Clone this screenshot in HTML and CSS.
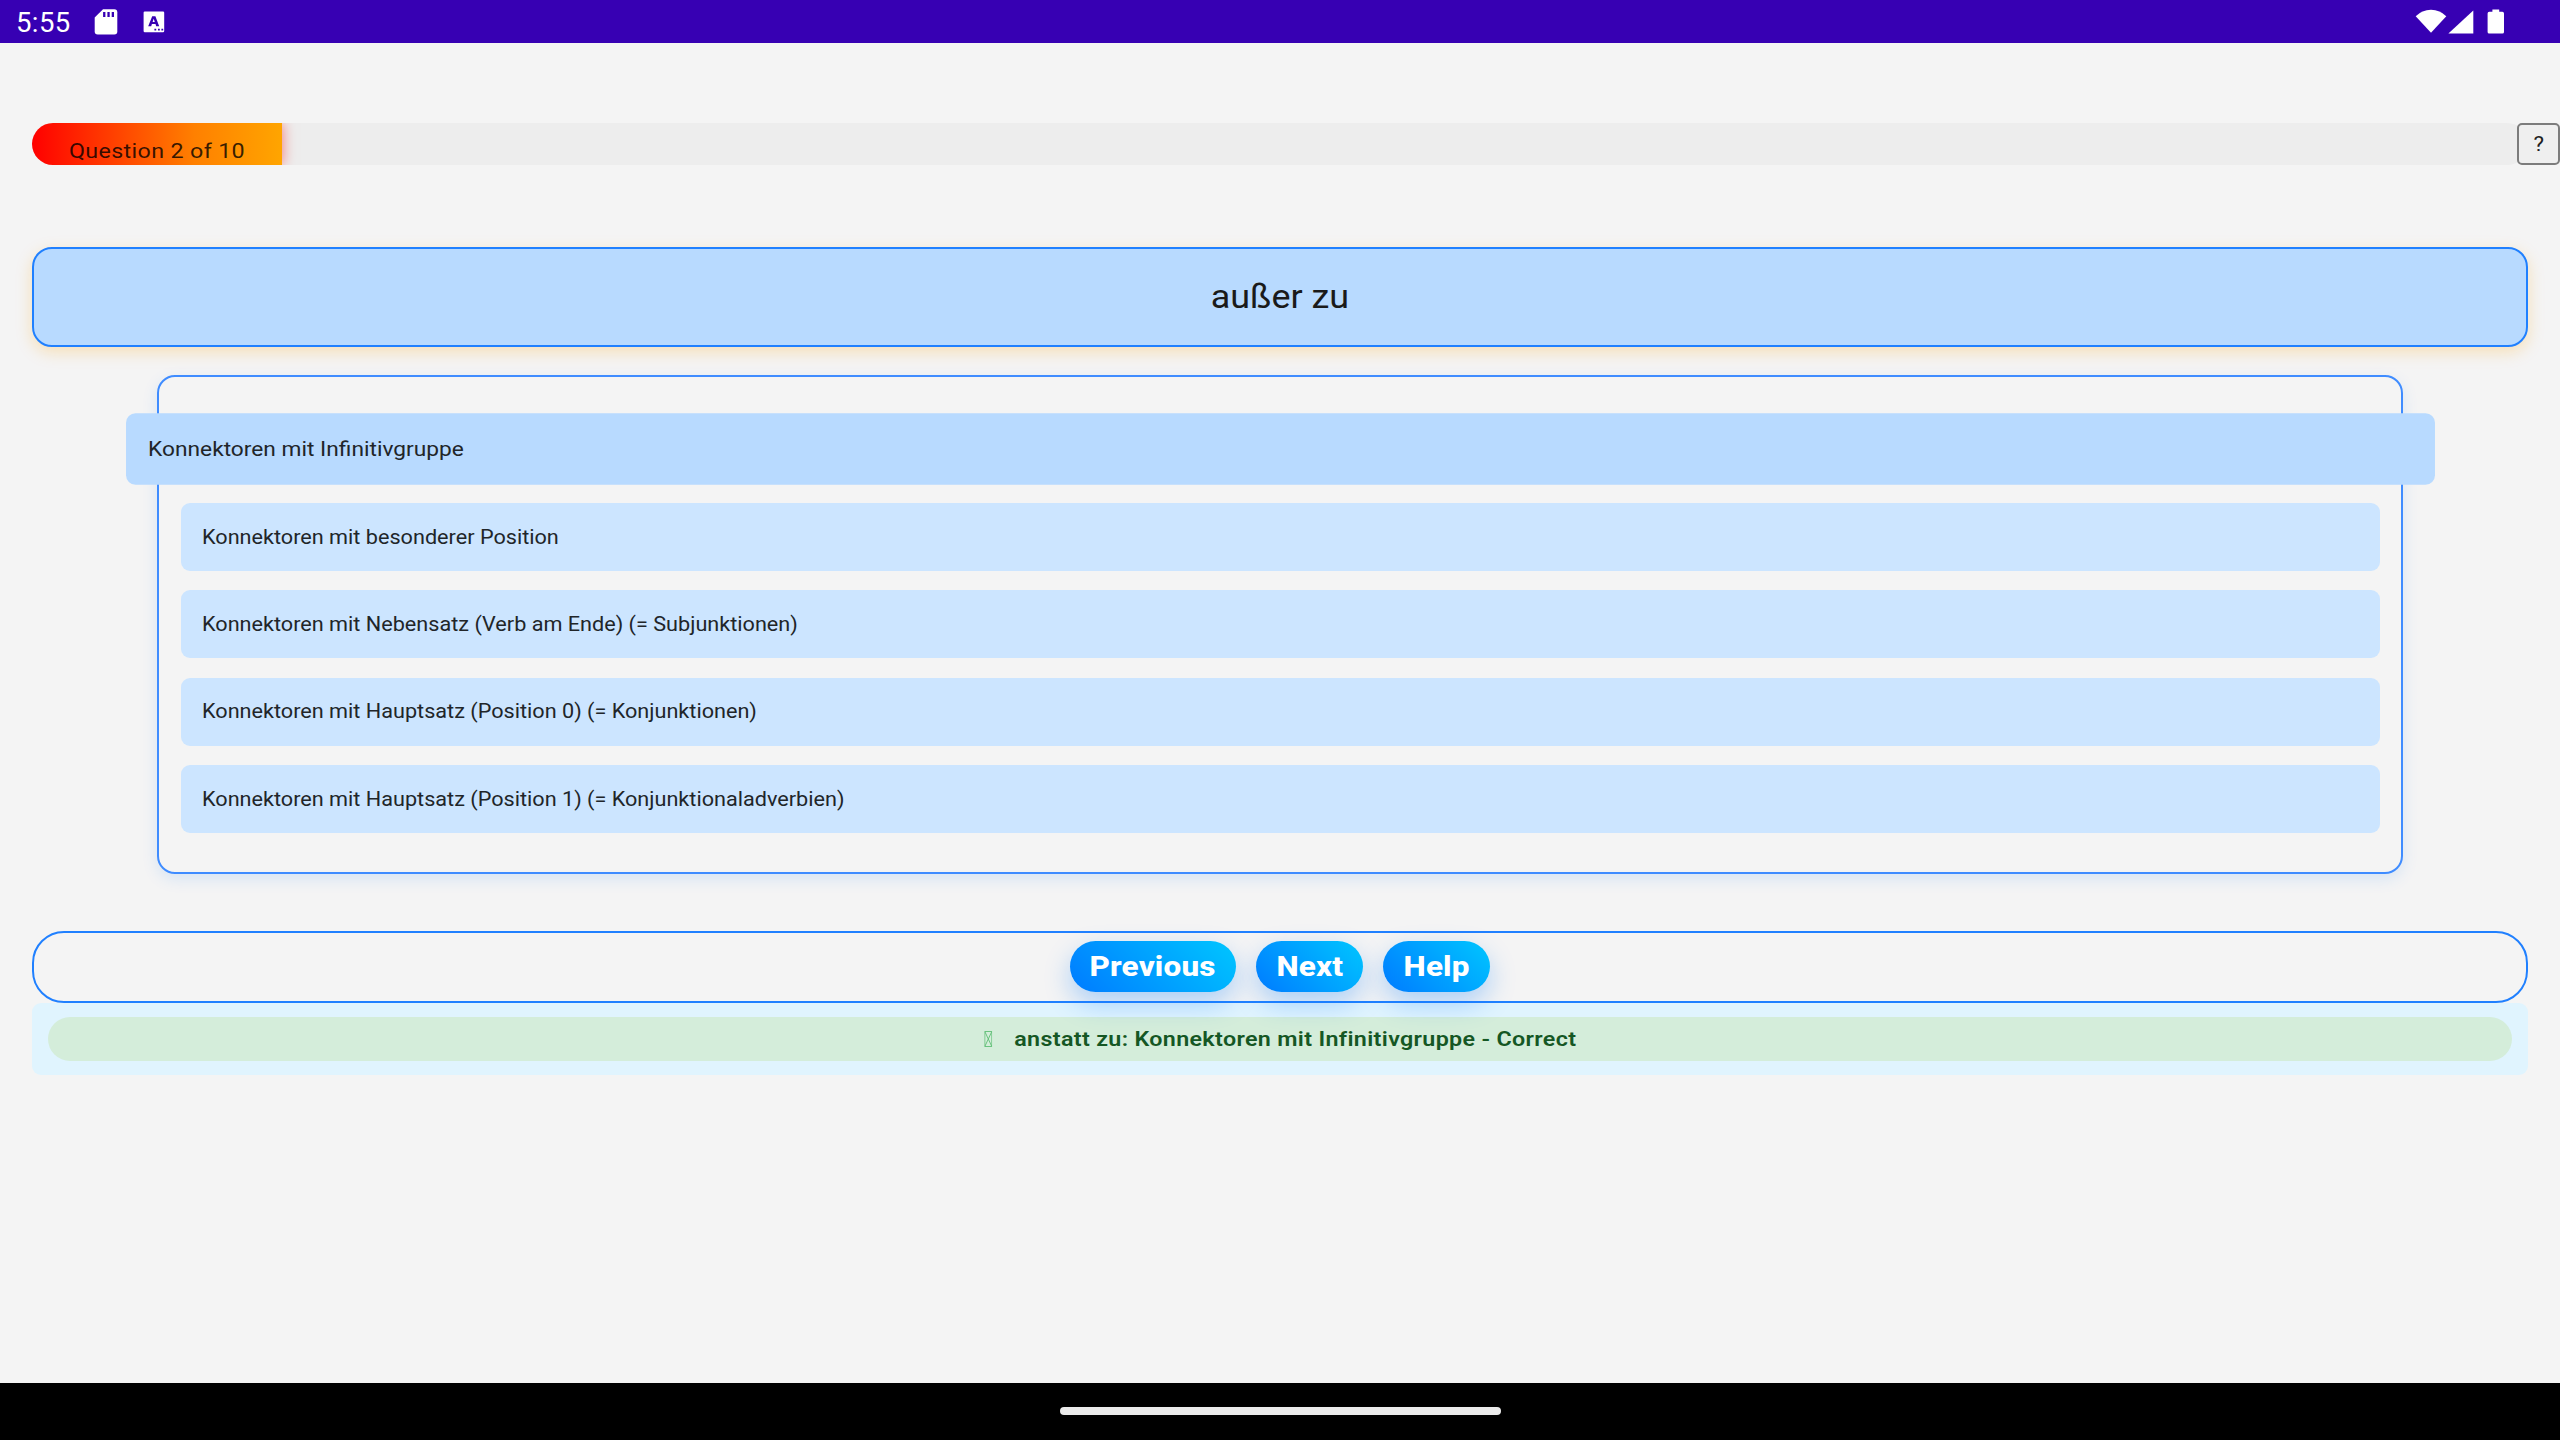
FILE: index.html
```html
<!DOCTYPE html>
<html lang="de">
<head>
<meta charset="utf-8">
<title>Konnektoren Quiz</title>
<link rel="stylesheet" href="styles.css">
</head>
<body>
<header class="status-bar">
  <span class="clock">5:55</span>
  <svg class="icon-sd" viewBox="0 0 24 26" width="24" height="26"><path fill="#fff" d="M9 0.3H20.3Q23.3 0.3 23.3 3.3V22.4Q23.3 25.4 20.3 25.4H3.7Q.7 25.4 .7 22.4V8.6Z"/><path fill="#3700b3" d="M9.1 3H11.4V8H9.1ZM13.4 3H15.7V8H13.4ZM17.7 3H20V8H17.7Z"/></svg>
  <svg class="icon-lang" viewBox="0 0 22 22" width="22" height="22"><rect x=".6" y=".6" width="20.6" height="20.6" rx="1.2" fill="#fff"/><path fill="#3700b3" fill-rule="evenodd" d="M9.2 5.2H12.4L16.2 15.2H13.2L12.5 13.1H8.9L8.2 15.2H5.2ZM10.7 7.8L9.6 11H11.8ZM11.4 17.7h1.8v1.8h-1.8ZM15 17.7h1.8v1.8H15ZM18.4 17.7h1.8v1.8h-1.8Z"/></svg>
  <span class="status-spacer"></span>
  <svg class="icon-wifi" viewBox="0 0 32 24" width="32" height="24"><path fill="#fff" d="M.7 7.2Q7 .7 16 .7T31.3 7.2L16 23.7Z"/></svg>
  <svg class="icon-signal" viewBox="0 0 26 24" width="26" height="24"><path fill="#fff" d="M25.3.6V23.4H.4Z"/></svg>
  <svg class="icon-battery" viewBox="0 0 18 25" width="18" height="25"><path fill="#fff" d="M5.4.5H12.2V2.8H15.4Q17 2.8 17 4.4V23Q17 24.6 15.4 24.6H2.2Q.6 24.6 .6 23V4.4Q.6 2.8 2.2 2.8H5.4Z"/></svg>
</header>

<main class="quiz">
  <div class="progress-row">
    <div class="progress"><div class="progress-fill" style="width:10%"><span class="progress-label wide">Question 2 of 10</span></div></div>
    <button class="hint"><span class="wide centered">?</span></button>
  </div>
  <section class="question"><span class="wide centered">außer zu</span></section>
  <section class="options">
    <div class="option selected"><span class="wide">Konnektoren mit Infinitivgruppe</span></div>
    <div class="option"><span class="wide">Konnektoren mit besonderer Position</span></div>
    <div class="option"><span class="wide">Konnektoren mit Nebensatz (Verb am Ende) (= Subjunktionen)</span></div>
    <div class="option"><span class="wide">Konnektoren mit Hauptsatz (Position 0) (= Konjunktionen)</span></div>
    <div class="option"><span class="wide">Konnektoren mit Hauptsatz (Position 1) (= Konjunktionaladverbien)</span></div>
  </section>
  <nav class="controls">
    <button class="btn btn-wide"><span class="btn-label wide centered">Previous</span></button>
    <button class="btn"><span class="btn-label wide centered">Next</span></button>
    <button class="btn"><span class="btn-label wide centered">Help</span></button>
  </nav>
  <section class="feedback">
    <div class="result">
      <div class="result-line wide centered">
        <svg class="glyph" viewBox="0 0 8 16" width="7.2" height="16" preserveAspectRatio="none"><path fill="none" stroke="#5fbf76" stroke-width=".9" d="M.5 .5H7.5V15.5H.5ZM.5 .5L7.5 15.5M7.5 .5L.5 15.5"/></svg>
        <span>anstatt zu: Konnektoren mit Infinitivgruppe - Correct</span>
      </div>
    </div>
  </section>
</main>

<footer class="nav-bar"><div class="nav-handle"></div></footer>
</body>
</html>
```
FILE: styles.css
```css
* { box-sizing: border-box; }

body {
  margin: 0;
  width: 2560px;
  height: 1440px;
  overflow: hidden;
  display: flex;
  flex-direction: column;
  background: #f4f4f4;
  color: #212529;
  font-family: Roboto, "Liberation Sans", sans-serif;
  font-size: 20px;
}

/* Slightly extended letterforms */
.wide {
  display: inline-block;
  white-space: nowrap;
  transform: scaleX(1.082);
  transform-origin: left center;
}
.centered { transform-origin: center; }

/* Android status bar */
.status-bar {
  height: 43px;
  flex: none;
  display: flex;
  align-items: flex-start;
  padding-left: 16px;
  padding-right: 55px;
  background: #3700b3;
}
.clock {
  width: 78px;
  padding-top: 3px;
  font-size: 27.5px;
  line-height: 40px;
  letter-spacing: 0.4px;
  color: #fff;
}
.icon-sd { margin-top: 9px; }
.icon-lang { margin: 11px 0 0 25px; }
.status-spacer { flex: 1; }
.icon-wifi { margin-top: 9px; }
.icon-signal { margin: 10px 0 0 1px; }
.icon-battery { margin: 9px 0 0 13px; }

.quiz {
  flex: 1;
  display: flex;
  flex-direction: column;
  padding: 79.5px 0 0 32px;
}

/* Progress */
.progress-row {
  display: flex;
  height: 42.7px;
  margin-bottom: 81.6px;
}
.progress {
  width: 2496px;
  margin-right: -11px;
  flex: none;
  border-radius: 21.3px;
  overflow: hidden;
  background: #ededed;
}
.progress-fill {
  height: 100%;
  padding: 12px 0 0 37px;
  background: linear-gradient(to right, #ff0000, #ff8000 65%, #ffa500);
  box-shadow: 0 0 13px rgba(255, 0, 0, 0.5);
}
.progress-label {
  line-height: 32px;
  font-size: 20.8px;
  letter-spacing: 0.3px;
  color: rgba(0, 0, 0, 0.8);
  transform: scaleX(1.12);
}
.hint {
  position: relative;
  width: 43px;
  padding: 0;
  border: 2px solid #7c7c7c;
  border-radius: 5px;
  background: #efefef;
  color: #212121;
  font: 20.6px Roboto, sans-serif;
}

/* Question */
.question {
  width: 2496px;
  height: 100.7px;
  flex: none;
  display: flex;
  align-items: center;
  justify-content: center;
  padding-bottom: 1px;
  border: 2px solid #2080ff;
  border-radius: 20px;
  background: #b8daff;
  box-shadow: 0 5px 16px rgba(255, 165, 0, 0.25);
  color: #1a1a1a;
  font-size: 33.2px;
}

/* Options */
.options {
  width: 2246px;
  height: 499px;
  flex: none;
  display: flex;
  flex-direction: column;
  gap: 19.3px;
  margin: 27.8px 0 56.5px 125px;
  padding: 38.2px 21.5px 0;
  border: 2px solid #3f8cff;
  border-radius: 18px;
  box-shadow: 0 5px 16px rgba(0, 123, 255, 0.12);
}
.option {
  height: 68.1px;
  flex: none;
  display: flex;
  align-items: center;
  padding: 0 0 0.6px 21.2px;
  border-radius: 9px;
  background: #cce5ff;
}
.option.selected {
  transform: scale(1.05);
  padding: 0 0 0 21px;
  background: #b8daff;
}

/* Navigation buttons */
.controls {
  width: 2496px;
  height: 72px;
  flex: none;
  display: flex;
  justify-content: center;
  gap: 20px;
  padding-top: 8.5px;
  border: 2px solid #2080ff;
  border-radius: 32px;
  position: relative;
}
.btn {
  width: 107px;
  height: 51px;
  padding: 0;
  border: 0;
  border-radius: 25.5px;
  background: linear-gradient(45deg, #007bff, #00c6ff);
  box-shadow: 0 11px 27px rgba(0, 123, 255, 0.3);
  color: #fff;
  font: 800 28.2px Roboto, sans-serif;
  letter-spacing: 0.15px;
}
.btn-label { transform: scaleX(1.115); }
.btn-wide { width: 166px; }

/* Feedback */
.feedback {
  width: 2496px;
  height: 72.7px;
  flex: none;
  padding: 14px 16px;
  border-radius: 9px;
  background: #e0f4fe;
}
.result {
  height: 44px;
  display: flex;
  align-items: center;
  justify-content: center;
  border-radius: 22px;
  background: #d4edda;
  color: #155724;
  font-size: 20.8px;
  font-weight: 600;
  letter-spacing: 0.3px;
}
.result-line {
  display: flex;
  align-items: center;
  gap: 19.6px;
  transform: scaleX(1.12);
}

/* Gesture bar */
.nav-bar {
  height: 57.4px;
  flex: none;
  display: flex;
  justify-content: center;
  padding-top: 24.5px;
  background: #000;
}
.nav-handle {
  width: 441px;
  height: 8px;
  border-radius: 4px;
  background: #ebebeb;
}
```
